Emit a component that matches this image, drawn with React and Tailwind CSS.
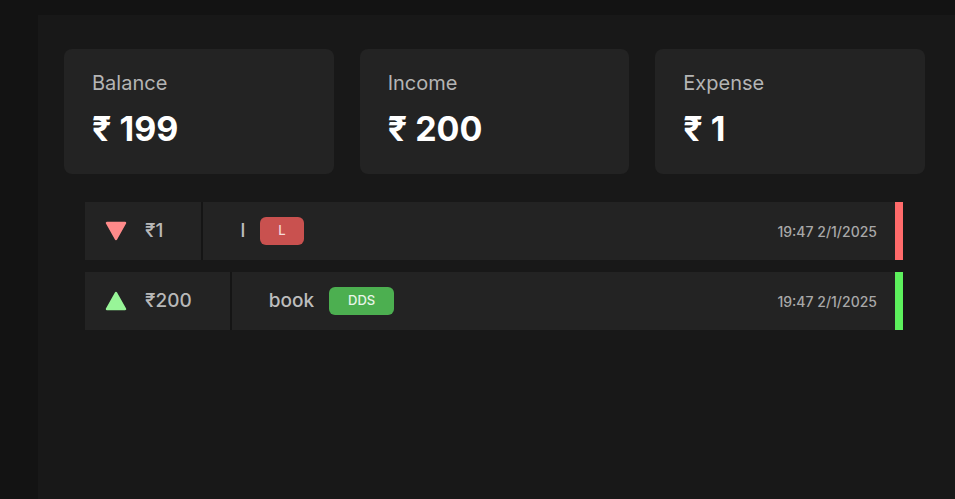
const summary = [
  { label: 'Balance', value: '₹ 199' },
  { label: 'Income', value: '₹ 200' },
  { label: 'Expense', value: '₹ 1' },
];

const transactions = [
  { type: 'expense', amount: '₹1', desc: 'l', tag: 'L', time: '19:47 2/1/2025' },
  { type: 'income', amount: '₹200', desc: 'book', tag: 'DDS', time: '19:47 2/1/2025' },
];

function Triangle({ up }) {
  return (
    <svg width="22" height="20" viewBox="0 0 22 20" className="shrink-0">
      {up ? (
        <path d="M11 2 L20 18 L2 18 Z" fill="#98f598" stroke="#98f598" strokeWidth="2.5" strokeLinejoin="round" />
      ) : (
        <path d="M2 2 L20 2 L11 18 Z" fill="#ff8a8a" stroke="#ff8a8a" strokeWidth="2.5" strokeLinejoin="round" />
      )}
    </svg>
  );
}

export default function App() {
  return (
    <div className="w-[955px] h-[499px] overflow-hidden bg-[#131313] pt-[15px] pl-[38px] font-['Inter','Noto_Sans',sans-serif]">
      <div className="h-full bg-[#181818] pt-[34px] pl-[26px] pr-[30px]">
        {/* Summary cards */}
        <div className="grid grid-cols-3 gap-[26px]">
          {summary.map((s) => (
            <div key={s.label} className="h-[125px] rounded-lg bg-[#232323] pl-[28px] pt-[22px]">
              <p className="text-[20px] leading-[24px] text-[#b4b4b4]">{s.label}</p>
              <p className="mt-[14px] text-[34px] leading-[40px] font-bold text-white">{s.value}</p>
            </div>
          ))}
        </div>

        {/* Transactions */}
        <div className="mt-[28px] ml-[21px] mr-[22px] flex flex-col gap-[12px]">
          {transactions.map((t, i) => (
            <div key={i} className="flex h-[58px]">
              <div className="flex items-center gap-[18px] bg-[#232323] pl-[20px] pr-[38px]">
                <Triangle up={t.type === 'income'} />
                <span className="text-[19px] font-medium text-[#b8b8b8]">{t.amount}</span>
              </div>
              <div className="w-[2px] bg-[#151515]" />
              <div className="flex flex-1 items-center bg-[#232323] pl-[37px] pr-[18px]">
                <span className="text-[19px] font-medium text-[#bdbdbd]">{t.desc}</span>
                <span
                  className={
                    t.type === 'income'
                      ? 'ml-[15px] rounded-md bg-[#4caf50] px-[19px] py-[4px] text-[13px] font-medium text-[#e8f5e8]'
                      : 'ml-[15px] rounded-md bg-[#c9514f] px-[18px] py-[4px] text-[13px] font-medium text-[#f5dada]'
                  }
                >
                  {t.tag}
                </span>
                <span className="ml-auto text-[14px] font-medium text-[#a8a8a8]">{t.time}</span>
              </div>
              <div className={t.type === 'income' ? 'w-[8px] bg-[#5df05d]' : 'w-[8px] bg-[#ff6b6b]'} />
            </div>
          ))}
        </div>
      </div>
    </div>
  );
}
